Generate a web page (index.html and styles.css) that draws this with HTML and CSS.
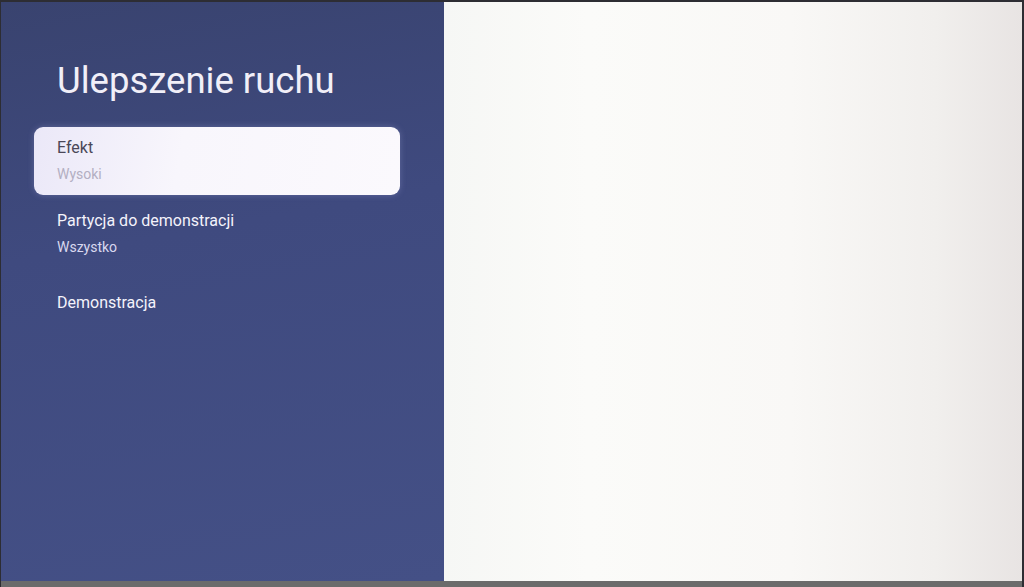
FILE: index.html
```html
<!DOCTYPE html>
<html lang="pl">
<head>
<meta charset="utf-8">
<link rel="stylesheet" href="styles.css">
</head>
<body>
<div class="screen">
  <div class="frame">
    <aside class="panel">
      <h1 class="title">Ulepszenie ruchu</h1>
      <ul class="menu">
        <li class="item active">
          <div class="label">Efekt</div>
          <div class="value">Wysoki</div>
        </li>
        <li class="item">
          <div class="label">Partycja do demonstracji</div>
          <div class="value">Wszystko</div>
        </li>
        <li class="item single">
          <div class="label">Demonstracja</div>
        </li>
      </ul>
    </aside>
    <main class="preview"></main>
  </div>
  <div class="bezel"></div>
</div>
</body>
</html>
```

FILE: styles.css
```css
html, body {
  margin: 0;
  padding: 0;
  width: 1024px;
  height: 587px;
  overflow: hidden;
  background: #2a2a2e;
  font-family: Roboto, "Noto Sans", sans-serif;
}
.screen {
  width: 1024px;
  height: 587px;
  display: flex;
  flex-direction: column;
  box-sizing: border-box;
  padding: 2px 2px 0 1px;
  background: #2d2d33;
}
.frame {
  flex: 1;
  display: flex;
  min-height: 0;
}
.panel {
  width: 443px;
  flex: none;
  background: linear-gradient(170deg, #39436f 0%, #3f4a7f 40%, #445086 100%);
  box-sizing: border-box;
  padding-top: 56px;
}
.title {
  margin: 0 0 23px 56px;
  font-weight: 400;
  font-size: 36.5px;
  line-height: 46px;
  color: #f1eff8;
}
.menu {
  list-style: none;
  margin: 0;
  padding: 0;
}
.item {
  margin: 0 44px 0 33px;
  padding: 11px 0 11px 23px;
  height: 46px;
}
.item.active {
  background: linear-gradient(100deg, #ebe8f8 0%, #f8f6fc 40%, #fbf9fd 100%);
  border-radius: 9px;
  box-shadow: 0 0 6px rgba(200, 200, 255, 0.25);
}
.label {
  font-size: 16px;
  line-height: 20px;
  color: #f4f3fb;
}
.value {
  margin-top: 7px;
  font-size: 14px;
  line-height: 18px;
  color: #d9d8ef;
}
.active .label { color: #4a4758; }
.active .value { color: #b3afc2; }
.item.single { padding-top: 20px; }
.item + .item { margin-top: 5px; }
.preview {
  flex: 1;
  background: linear-gradient(90deg, #f6f7f5 0%, #fbfbf9 25%, #f9f8f6 60%, #f1efed 85%, #e8e4e3 100%);
}
.bezel {
  height: 6px;
  flex: none;
  background: #6b6b6b;
}
```
